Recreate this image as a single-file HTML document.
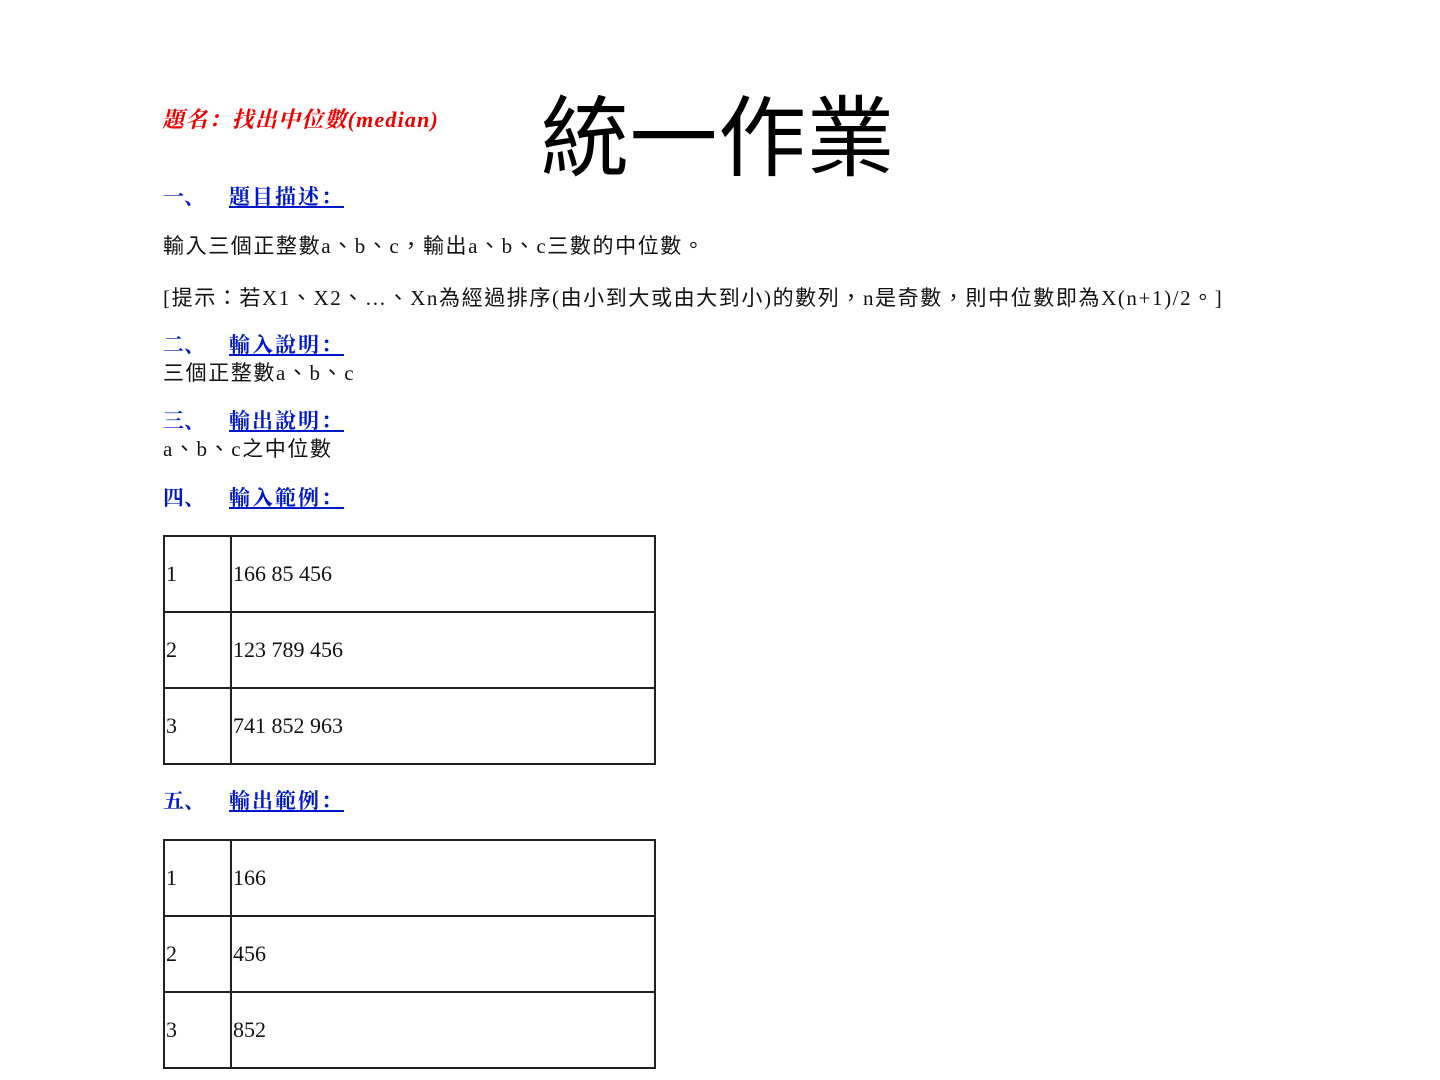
<!DOCTYPE html>
<html><head><meta charset="utf-8"><style>
body{margin:0;width:1440px;height:1080px;background:#fff;position:relative;overflow:hidden;font-family:"Liberation Serif","Noto Serif CJK SC","Noto Sans CJK TC",serif;color:#111}
.a{position:absolute;white-space:nowrap}
.t{font-family:"Liberation Sans","Noto Sans CJK TC",sans-serif;font-size:88px;letter-spacing:0.5px;left:541px;top:84px;color:#000;line-height:110px}
.red{color:#e00;font-style:italic;font-weight:bold;font-size:22px;letter-spacing:1.2px;left:162px;top:103px}
.h{color:#0019c8;font-weight:bold;font-size:21px;left:163px}
.h u{margin-left:24px;letter-spacing:2px}
.p{font-size:21px;letter-spacing:1.6px;left:163px;font-family:"Liberation Serif","Noto Sans CJK TC",serif}
table{position:absolute;left:163px;border-collapse:collapse;width:493px}
td{border:2.5px solid #222;height:74px;font-size:22px;padding:0 0 0 1px;vertical-align:middle}
td:first-child{width:64px}
</style></head><body>
<div class="a t">統一作業</div>
<div class="a red">題名：找出中位數(median)</div>
<div class="a h" style="top:181px">一、<u>題目描述：</u></div>
<div class="a p" style="top:230px">輸入三個正整數a、b、c，輸出a、b、c三數的中位數。</div>
<div class="a p" style="top:282px">[提示：若X1、X2、…、Xn為經過排序(由小到大或由大到小)的數列，n是奇數，則中位數即為X(n+1)/2。]</div>
<div class="a h" style="top:329px">二、<u>輸入說明：</u></div>
<div class="a p" style="top:357px">三個正整數a、b、c</div>
<div class="a h" style="top:405px">三、<u>輸出說明：</u></div>
<div class="a p" style="top:433px">a、b、c之中位數</div>
<div class="a h" style="top:482px">四、<u>輸入範例：</u></div>
<table style="top:535px"><tr><td>1</td><td>166 85 456</td></tr><tr><td>2</td><td>123 789 456</td></tr><tr><td>3</td><td>741 852 963</td></tr></table>
<div class="a h" style="top:785px">五、<u>輸出範例：</u></div>
<table style="top:839px"><tr><td>1</td><td>166</td></tr><tr><td>2</td><td>456</td></tr><tr><td>3</td><td>852</td></tr></table>
</body></html>
